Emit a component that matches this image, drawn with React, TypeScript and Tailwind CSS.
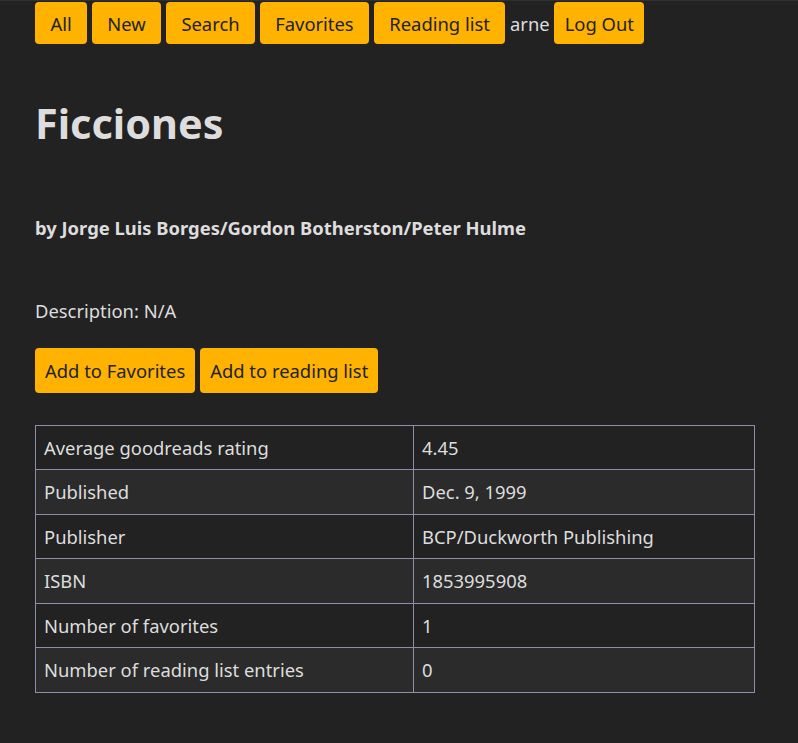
import React from 'react';

const NAV = ['All', 'New', 'Search', 'Favorites', 'Reading list'];

const ROWS: [string, string][] = [
  ['Average goodreads rating', '4.45'],
  ['Published', 'Dec. 9, 1999'],
  ['Publisher', 'BCP/Duckworth Publishing'],
  ['ISBN', '1853995908'],
  ['Number of favorites', '1'],
  ['Number of reading list entries', '0'],
];

const BTN = 'bg-[#ffb300] text-[#222222] rounded-[4px] text-[18.4px]';

export default function App() {
  return (
    <div
      className="min-h-[743px] bg-[#222222] text-[#dddddd] text-[18.4px] leading-[27.6px]"
      style={{ fontFamily: '"Noto Sans", "DejaVu Sans", sans-serif' }}
    >
      <div className="h-px bg-[#2e2e33]" />
      <div className="pl-[35px] w-[755px]">
        <nav className="flex items-center gap-[4.6px] pt-px">
          {NAV.map(n => (
            <a key={n} className={`${BTN} px-[15.5px] h-[42px] leading-[44px]`}>{n}</a>
          ))}
          <span className="pt-[2px]">arne</span>
          <button className={`${BTN} px-[10.5px] h-[42px] leading-[44px]`}>Log Out</button>
        </nav>

        <h1 className="text-[41.4px] font-bold leading-none mt-[59px] text-[#dddddd]">Ficciones</h1>

        <p className="font-bold mt-[70px]">by Jorge Luis Borges/Gordon Botherston/Peter Hulme</p>

        <p className="mt-[55px]">Description: N/A</p>

        <div className="flex gap-[5px] mt-[23px]">
          <button className={`${BTN} px-[10px] pt-[2px] h-[45px]`}>Add to Favorites</button>
          <button className={`${BTN} px-[10px] pt-[2px] h-[45px]`}>Add to reading list</button>
        </div>

        <table className="mt-[32px] w-[720px] border-collapse">
          <tbody>
            {ROWS.map(([k, v], i) => (
              <tr key={k} className={i % 2 ? 'bg-[#2b2b2b]' : 'bg-[#222222]'}>
                <td className="border border-[#8e8eaa] px-2 py-2 leading-[27.5px] w-[378px]">{k}</td>
                <td className="border border-[#8e8eaa] px-2 py-2 leading-[27.5px]">{v}</td>
              </tr>
            ))}
          </tbody>
        </table>
      </div>
    </div>
  );
}
